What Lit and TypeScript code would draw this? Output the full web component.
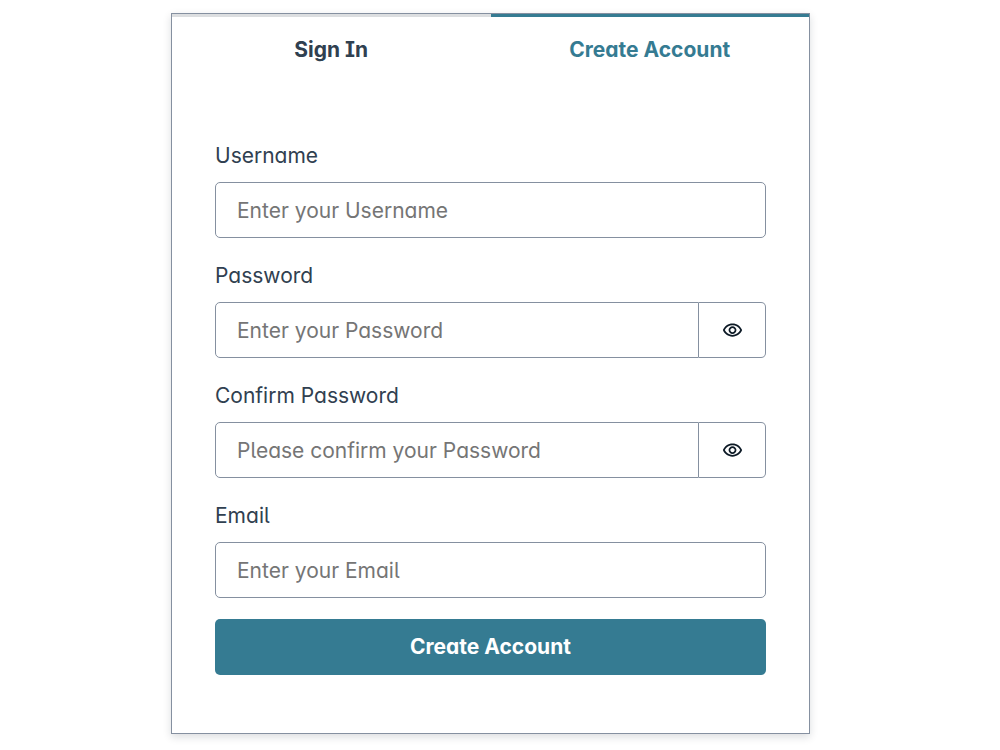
import { LitElement, html, css, svg, nothing } from "lit";
import { customElement, property, state } from "lit/decorators.js";

const eye = svg`<path fill="currentColor" d="M12 6C15.79 6 19.17 8.13 20.82 11.5C19.17 14.87 15.79 17 12 17C8.21 17 4.83 14.87 3.18 11.5C4.83 8.13 8.21 6 12 6ZM12 4C7 4 2.73 7.11 1 11.5C2.73 15.89 7 19 12 19C17 19 21.27 15.89 23 11.5C21.27 7.11 17 4 12 4ZM12 9C13.38 9 14.5 10.12 14.5 11.5C14.5 12.88 13.38 14 12 14C10.62 14 9.5 12.88 9.5 11.5C9.5 10.12 10.62 9 12 9ZM12 7C9.52 7 7.5 9.02 7.5 11.5C7.5 13.98 9.52 16 12 16C14.48 16 16.5 13.98 16.5 11.5C16.5 9.02 14.48 7 12 7Z"/>`;

@customElement("auth-field")
export class AuthField extends LitElement {
  @property() label = "";
  @property() placeholder = "";
  @property() name = "";
  @property() type = "text";
  @state() private revealed = false;

  static styles = css`
    :host {
      display: flex;
      flex-direction: column;
      gap: 9px;
    }
    .label {
      color: #304050;
    }
    .group {
      display: flex;
    }
    .input,
    .reveal {
      box-sizing: border-box;
      height: 56px;
      margin: 0;
      border: 1px solid #8590a0;
      border-radius: 5px;
      background: #fff;
      color: #304050;
      font: inherit;
      font-feature-settings: inherit;
    }
    .input {
      flex: 1;
      min-width: 0;
      padding: 0 21px;
    }
    .input::placeholder {
      color: #757575;
      opacity: 1;
    }
    .input.joined {
      border-radius: 5px 0 0 5px;
    }
    .reveal {
      display: flex;
      align-items: center;
      justify-content: center;
      width: 67px;
      padding: 0;
      border-left: 0;
      border-radius: 0 5px 5px 0;
      color: #0d1a26;
      cursor: pointer;
    }
    .icon {
      width: 21px;
      height: 21px;
    }
  `;

  render() {
    const secret = this.type === "password";
    return html`
      <label class="label" for="control">${this.label}</label>
      <div class="group">
        <input
          id="control"
          class="input ${secret ? "joined" : ""}"
          name=${this.name}
          type=${secret && this.revealed ? "text" : this.type}
          placeholder=${this.placeholder}
        />
        ${secret
          ? html`<button
              class="reveal"
              type="button"
              aria-label="Show password"
              aria-pressed=${this.revealed}
              @click=${() => (this.revealed = !this.revealed)}
            >
              <svg class="icon" viewBox="0 0 24 24" aria-hidden="true">${eye}</svg>
            </button>`
          : nothing}
      </div>
    `;
  }
}

@customElement("app-root")
export class AppRoot extends LitElement {
  @state() private tab = "create";

  static styles = css`
    :host {
      display: block;
      padding: 13px 35px 13px 16px;
      font: 400 21px/34px Inter, sans-serif;
      font-feature-settings: "cv05", "cv08", "cv11";
      color: #304050;
    }
    .card {
      box-sizing: border-box;
      max-width: 639px;
      margin: 0 auto;
      border: 1px solid #8590a0;
      background: #fff;
      box-shadow: 0 3px 8px rgba(13, 26, 38, 0.15);
    }
    .tabs {
      display: flex;
    }
    .tab {
      flex: 1;
      margin: 0;
      padding: 16px;
      border: 0;
      border-top: 3px solid #dcdee0;
      background: none;
      color: #304050;
      font: inherit;
      font-feature-settings: inherit;
      font-weight: 700;
      cursor: pointer;
    }
    .tab.active {
      border-color: #357b92;
      color: #357b92;
    }
    .form {
      display: flex;
      flex-direction: column;
      gap: 21px;
      padding: 56px 43px 58px;
    }
    .submit {
      height: 56px;
      border: 0;
      border-radius: 5px;
      background: #357b92;
      color: #fff;
      font: inherit;
      font-feature-settings: inherit;
      font-weight: 700;
      cursor: pointer;
    }
  `;

  private renderTab(id: string, text: string) {
    const active = this.tab === id;
    return html`<button
      class="tab ${active ? "active" : ""}"
      type="button"
      role="tab"
      aria-selected=${active}
      @click=${() => (this.tab = id)}
    >${text}</button>`;
  }

  render() {
    return html`
      <main class="card">
        <div class="tabs" role="tablist">
          ${this.renderTab("signin", "Sign In")}
          ${this.renderTab("create", "Create Account")}
        </div>
        <form class="form" @submit=${(e: Event) => e.preventDefault()}>
          <auth-field label="Username" name="username" placeholder="Enter your Username"></auth-field>
          <auth-field label="Password" name="password" type="password" placeholder="Enter your Password"></auth-field>
          <auth-field label="Confirm Password" name="confirm" type="password" placeholder="Please confirm your Password"></auth-field>
          <auth-field label="Email" name="email" type="email" placeholder="Enter your Email"></auth-field>
          <button class="submit" type="submit">Create Account</button>
        </form>
      </main>
    `;
  }
}
